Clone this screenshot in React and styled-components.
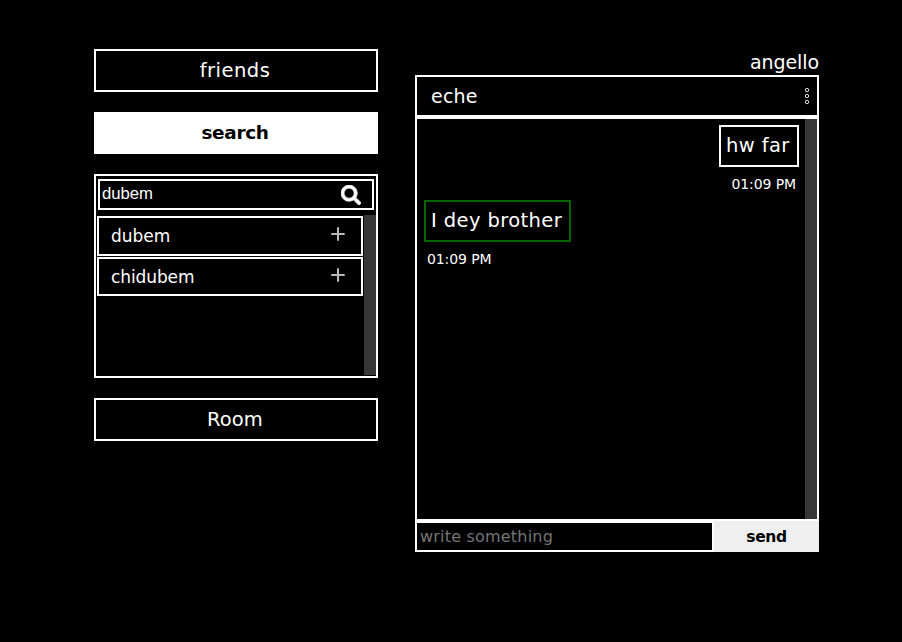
import React from "react";
import styled, { createGlobalStyle } from "styled-components";

const Global = createGlobalStyle`
  * { box-sizing: border-box; }
  body { margin: 0; background: #000; color: #fff; font-family: "DejaVu Sans", sans-serif; }
  button, input { font-family: inherit; margin: 0; border-radius: 0; }
`;

const Page = styled.main`
  display: flex;
  align-items: flex-start;
  gap: 37px;
  width: 902px;
  height: 642px;
  padding: 49px 83px 0 94px;
  overflow: hidden;
`;

const Sidebar = styled.aside`
  display: flex;
  flex-direction: column;
  gap: 20px;
  width: 284px;
`;

const Label = styled.span`
  font-size: ${(p) => p.$size || 19}px;
  letter-spacing: ${(p) => p.$track || 0}px;
  line-height: 24px;
  white-space: nowrap;
`;

const Tab = styled.button`
  height: ${(p) => (p.$active ? 42 : 43)}px;
  padding: 0 2px 0 0;
  border: 2px solid #fff;
  background: ${(p) => (p.$active ? "#fff" : "#000")};
  color: ${(p) => (p.$active ? "#000" : "#fff")};
  font-weight: ${(p) => (p.$active ? 700 : 400)};
`;

const Panel = styled.section`
  display: flex;
  flex-direction: column;
  gap: 5px;
  height: 204px;
  padding: 3px 0 1px 1px;
  border: 2px solid #fff;
`;

const SearchBox = styled.div`
  display: flex;
  align-items: center;
  height: 31px;
  margin: 0 2px 0 1px;
  padding-right: 11px;
  border: 2px solid #fff;
`;

const SearchInput = styled.input`
  flex: 1;
  min-width: 0;
  padding: 0 2px 2px;
  border: 0;
  outline: 0;
  background: transparent;
  color: #fff;
  font: 16.7px/20px "Liberation Sans", Arial, sans-serif;
`;

const Scroller = styled.div`
  display: flex;
  flex: 1;
  min-height: 0;
`;

const Track = styled.div`
  width: 12px;
  background: #363636;
`;

const Results = styled.div`
  display: flex;
  flex: 1;
  flex-direction: column;
  gap: 1px;
  padding: 1px 1px 0 0;
`;

const Result = styled.div`
  display: flex;
  align-items: flex-start;
  justify-content: space-between;
  height: ${(p) => p.$height}px;
  padding: 6px 16px 0 12px;
  border: 2px solid #fff;
`;

const PlusIcon = styled.svg`
  width: 14px;
  height: 14px;
  margin-top: 3px;
`;

const Chat = styled.section`
  display: flex;
  flex-direction: column;
  width: 404px;
`;

const Username = styled.div`
  height: 26px;
  padding-top: 1px;
  text-align: right;
`;

const ChatHeader = styled.header`
  display: flex;
  align-items: center;
  justify-content: space-between;
  height: 42px;
  padding: 0 7px 0 14px;
  border: 2px solid #fff;
`;

const ChatBody = styled.div`
  display: flex;
  height: 404px;
  border: 2px solid #fff;
`;

const Messages = styled.div`
  display: flex;
  flex: 1;
  flex-direction: column;
  gap: 8px;
  padding: 6px 6px 0 7px;
`;

const Message = styled.div`
  display: flex;
  flex-direction: column;
  align-items: ${(p) => (p.$own ? "flex-end" : "flex-start")};
  height: 67px;
`;

const Bubble = styled.div`
  flex: none;
  width: ${(p) => p.$width}px;
  height: 42px;
  padding: 7px 0 0 5px;
  border: 2px solid ${(p) => (p.$own ? "#fff" : "#006400")};
`;

const Time = styled.time`
  padding: 7px 3px 0;
  font-size: 14px;
  line-height: 20px;
  letter-spacing: -0.1px;
`;

const Composer = styled.form`
  display: flex;
  height: 31px;
`;

const Draft = styled.input`
  width: 299px;
  padding: 0 3px;
  border: 2px solid #fff;
  outline: 0;
  background: #000;
  color: #fff;
  font-size: 16px;
  letter-spacing: 0.2px;
  &::placeholder { color: #757575; opacity: 1; }
`;

const Send = styled.button`
  flex: 1;
  padding: 0;
  border: 0;
  background: #efefef;
  color: #000;
  font-weight: 700;
`;

const Plus = () => (
  <PlusIcon viewBox="0 0 14 14" fill="none" stroke="#bbb" strokeWidth="2">
    <path d="M7 .3v13.4M.3 7h13.4" />
  </PlusIcon>
);

const Magnifier = () => (
  <svg width="20" height="20" viewBox="0 0 512 512" fill="#fff" stroke="#fff" strokeWidth="16">
    <path d="M505 442.700L405.300 343c-4.500-4.500-10.600-7-17-7H372c27.600-35.300 44-79.700 44-128C416 93.100 322.900 0 208 0S0 93.100 0 208s93.100 208 208 208c48.300 0 92.700-16.400 128-44v16.300c0 6.400 2.500 12.500 7 17l99.700 99.700c9.400 9.400 24.600 9.400 33.900 0l28.300-28.300c9.400-9.400 9.400-24.600.1-34zM208 336c-70.700 0-128-57.200-128-128 0-70.700 57.200-128 128-128 70.700 0 128 57.200 128 128 0 70.700-57.200 128-128 128z" />
  </svg>
);

const Dots = () => (
  <svg width="6" height="18" viewBox="0 0 6 18" fill="none" stroke="#ddd" strokeWidth="1">
    <circle cx="3" cy="3" r="1.7" />
    <circle cx="3" cy="9" r="1.7" />
    <circle cx="3" cy="15" r="1.7" />
  </svg>
);

export default function App() {
  return (
    <>
      <Global />
      <Page>
        <Sidebar>
          <Tab><Label $size={19.5} $track={0.5}>friends</Label></Tab>
          <Tab $active><Label $size={18.5} $track={-0.35}>search</Label></Tab>
          <Panel>
            <SearchBox>
              <SearchInput defaultValue="dubem" />
              <Magnifier />
            </SearchBox>
            <Scroller>
              <Results>
                <Result $height={40}><Label $size={17}>dubem</Label><Plus /></Result>
                <Result $height={39}><Label $size={17} $track={-0.1}>chidubem</Label><Plus /></Result>
              </Results>
              <Track />
            </Scroller>
          </Panel>
          <Tab><Label $size={19.5} $track={0.1}>Room</Label></Tab>
        </Sidebar>
        <Chat>
          <Username><Label $track={-0.1}>angello</Label></Username>
          <ChatHeader><Label $track={0.2}>eche</Label><Dots /></ChatHeader>
          <ChatBody>
            <Messages>
              <Message $own>
                <Bubble $own $width={80}><Label $size={19.5} $track={0.4}>hw far</Label></Bubble>
                <Time>01:09 PM</Time>
              </Message>
              <Message>
                <Bubble $width={147}><Label $size={19.5} $track={0.4}>I dey brother</Label></Bubble>
                <Time>01:09 PM</Time>
              </Message>
            </Messages>
            <Track />
          </ChatBody>
          <Composer>
            <Draft placeholder="write something" />
            <Send type="button"><Label $size={15.5} $track={-0.4}>send</Label></Send>
          </Composer>
        </Chat>
      </Page>
    </>
  );
}
